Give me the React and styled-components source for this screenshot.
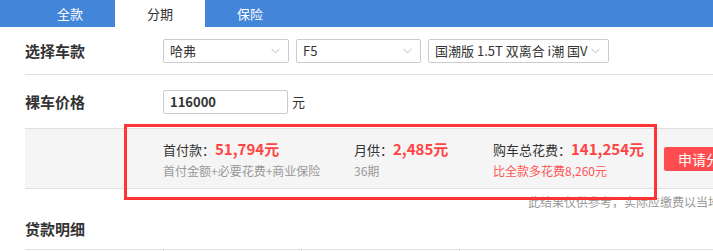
import React from "react";
import styled, { createGlobalStyle } from "styled-components";

const Global = createGlobalStyle`
  html, body { margin: 0; padding: 0; background: #fff; overflow: hidden; }
  body { font-family: "Noto Sans CJK SC", "Noto Sans", sans-serif; color: #333; }
`;

const Page = styled.div`
  position: relative;
  width: 713px;
  height: 251px;
  overflow: hidden;
`;

const TabBar = styled.div`
  display: flex;
  height: 27px;
  background: #4285d9;
  padding-left: 25px;
`;

const Tab = styled.div`
  width: 90px;
  display: flex;
  align-items: center;
  justify-content: center;
  font-size: 13px;
  color: ${(p) => (p.$active ? "#333" : "#fff")};
  background: ${(p) => (p.$active ? "#fff" : "transparent")};
`;

const Body = styled.div`
  padding-left: 25px;
  width: 900px;
`;

const Row = styled.div`
  display: flex;
  align-items: center;
  height: ${(p) => p.$h}px;
  border-bottom: 1px solid #e0e0e0;
`;

const Label = styled.div`
  width: 138px;
  flex: none;
  font-size: 15px;
  font-weight: bold;
  color: #333;
`;

const Select = styled.div`
  box-sizing: border-box;
  width: ${(p) => p.$w}px;
  height: 24px;
  margin-right: 7px;
  border: 1px solid #ccc;
  border-radius: 2px;
  display: flex;
  align-items: center;
  justify-content: space-between;
  padding: 0 8px 0 6px;
  font-size: 13px;
  color: #333;
  background: #fff;
`;

const Chevron = () => (
  <svg width="9" height="6" viewBox="0 0 9 6">
    <path d="M0.5 0.8 L4.5 4.8 L8.5 0.8" fill="none" stroke="#bbb" strokeWidth="1" />
  </svg>
);

const Input = styled.div`
  box-sizing: border-box;
  width: 125px;
  height: 24px;
  border: 1px solid #ccc;
  border-radius: 2px;
  display: flex;
  align-items: center;
  padding-left: 6px;
  font-size: 13px;
  font-weight: bold;
  color: #333;
`;

const Unit = styled.span`
  margin-left: 4px;
  font-size: 13px;
  color: #333;
`;

const Summary = styled.div`
  display: grid;
  grid-template-columns: 191px 139px 171px auto;
  align-items: center;
  height: 59px;
  padding-left: 138px;
  background: #f5f5f5;
  border-bottom: 1px solid #e0e0e0;
`;

const Item = styled.div`
  display: flex;
  flex-direction: column;
  gap: 4px;
  margin-top: 2px;
`;

const Main = styled.div`
  font-size: 13px;
  color: #333;
  line-height: 18px;
  white-space: nowrap;
`;

const Money = styled.span`
  font-size: 15px;
  font-weight: bold;
  color: #ff4444;
`;

const Sub = styled.div`
  font-size: 12px;
  line-height: 16px;
  color: ${(p) => (p.$red ? "#ff5555" : "#999")};
  white-space: nowrap;
`;

const ApplyButton = styled.div`
  width: 90px;
  height: 24px;
  border-radius: 2px;
  background: #ff4d4f;
  color: #fff;
  font-size: 14px;
  display: flex;
  align-items: center;
  padding-left: 14px;
  box-sizing: border-box;
  white-space: nowrap;
`;

const Note = styled.div`
  padding-left: 503px;
  margin-top: 5px;
  font-size: 12px;
  line-height: 16px;
  color: #999;
  white-space: nowrap;
`;

const Title = styled.div`
  margin-top: 4px;
  height: 28px;
  display: flex;
  align-items: center;
  font-size: 15px;
  font-weight: bold;
  color: #333;
`;

const TableHead = styled.div`
  display: flex;
  margin-top: 7px;
  border-top: 1px solid #e0e0e0;
  height: 30px;
`;

const Cell = styled.div`
  width: ${(p) => p.$w}px;
  border-left: ${(p) => (p.$first ? "none" : "1px solid #e0e0e0")};
  box-sizing: border-box;
`;

const Highlight = styled.div`
  position: absolute;
  left: 124px;
  top: 124px;
  width: 533px;
  height: 76px;
  border: 3px solid #ff3535;
  box-sizing: border-box;
  pointer-events: none;
`;

export default function App() {
  return (
    <Page>
      <Global />
      <TabBar>
        <Tab>全款</Tab>
        <Tab $active>分期</Tab>
        <Tab>保险</Tab>
      </TabBar>
      <Body>
        <Row $h={47}>
          <Label>选择车款</Label>
          <Select $w={126}>
            <span>哈弗</span>
            <Chevron />
          </Select>
          <Select $w={125}>
            <span>F5</span>
            <Chevron />
          </Select>
          <Select $w={181}>
            <span>国潮版 1.5T 双离合 i潮 国V</span>
            <Chevron />
          </Select>
        </Row>
        <Row $h={53}>
          <Label>裸车价格</Label>
          <Input>116000</Input>
          <Unit>元</Unit>
        </Row>
        <Summary>
          <Item>
            <Main>
              首付款：<Money>51,794元</Money>
            </Main>
            <Sub>首付金额+必要花费+商业保险</Sub>
          </Item>
          <Item>
            <Main>
              月供：<Money>2,485元</Money>
            </Main>
            <Sub>36期</Sub>
          </Item>
          <Item>
            <Main>
              购车总花费：<Money>141,254元</Money>
            </Main>
            <Sub $red>比全款多花费8,260元</Sub>
          </Item>
          <ApplyButton>申请分期</ApplyButton>
        </Summary>
        <Note>此结果仅供参考，实际应缴费以当地为准</Note>
        <Title>贷款明细</Title>
        <TableHead>
          <Cell $w={138} $first />
          <Cell $w={138} />
          <Cell $w={158} />
          <Cell $w={300} />
        </TableHead>
      </Body>
      <Highlight />
    </Page>
  );
}
